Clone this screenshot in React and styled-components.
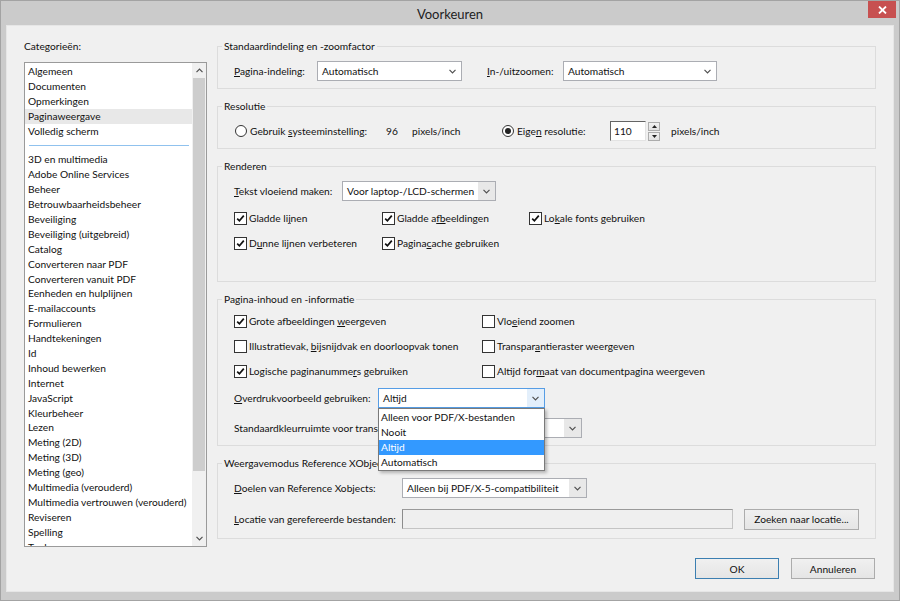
import React from "react";
import styled, { createGlobalStyle } from "styled-components";

const GlobalStyle = createGlobalStyle`
  html, body {
    margin: 0;
    padding: 0;
    background: #cbcbcb;
  }
  body {
    font-family: Lato, "Liberation Sans", sans-serif;
    font-size: 10.2px;
    color: #111;
  }
`;

const Window = styled.div`
  width: 900px;
  height: 601px;
  box-sizing: border-box;
  border: 1px solid #a3a3a3;
  background: #cbcbcb;
  display: flex;
  flex-direction: column;
`;

const TitleBar = styled.div`
  height: 24px;
  flex: none;
  display: grid;
  grid-template-columns: 1fr auto 1fr;
  align-items: center;
`;

const Title = styled.div`
  grid-column: 2;
  font-size: 13px;
  color: #222;
  padding-top: 1px;
`;

const CloseButton = styled.div`
  grid-column: 3;
  justify-self: end;
  align-self: start;
  width: 28px;
  height: 17px;
  margin-right: 3px;
  background: #c75050;
  display: flex;
  align-items: center;
  justify-content: center;
`;

const Body = styled.div`
  flex: 1;
  margin: 0 5px 8px;
  border: 1px solid #e6e6e6;
  background: #f0f0f0;
  padding: 13px 17px 0 17px;
  display: flex;
  flex-direction: column;
`;

const Main = styled.div`
  display: grid;
  grid-template-columns: 183px 1fr;
  column-gap: 10px;
`;

const LeftCol = styled.div`
  display: flex;
  flex-direction: column;
`;

const CatLabel = styled.div`
  line-height: 14px;
`;

const ListBox = styled.div`
  margin-top: 9px;
  height: 485px;
  box-sizing: border-box;
  border: 1px solid #9a9a9a;
  background: #fff;
  display: flex;
`;

const ListItems = styled.div`
  flex: 1;
  overflow: hidden;
  padding-top: 1px;
`;

const ListItem = styled.div`
  height: 14.9px;
  line-height: 14.9px;
  padding-left: 3px;
  white-space: nowrap;
  background: ${(p) => (p.$sel ? "#e8e8e8" : "transparent")};
`;

const Separator = styled.div`
  height: 14px;
  display: flex;
  align-items: center;
  padding: 0 3px 0 4px;
  &::after {
    content: "";
    flex: 1;
    height: 1px;
    background: #90c2ee;
  }
`;

const ScrollBar = styled.div`
  width: 14px;
  flex: none;
  display: flex;
  flex-direction: column;
  background: #f0f0f0;
`;

const ScrollArrow = styled.div`
  height: 15px;
  display: flex;
  align-items: center;
  justify-content: center;
`;

const ScrollTrack = styled.div`
  flex: 1;
`;

const ScrollThumb = styled.div`
  height: 393px;
  background: #cdcdcd;
  margin: 0 1px;
`;

const RightCol = styled.div`
  display: flex;
  flex-direction: column;
  gap: 10px;
`;

const Group = styled.fieldset`
  margin: 0;
  min-inline-size: 0;
  border: 1px solid #dcdcdc;
  padding: 0 0 ${(p) => p.$pb ?? 7}px 16px;
`;

const Legend = styled.legend`
  padding: 0 2px;
  margin-left: -12px;
  line-height: 14px;
`;

const Row = styled.div`
  display: flex;
  align-items: center;
  height: ${(p) => p.$h ?? 20}px;
  margin-top: ${(p) => p.$mt ?? 0}px;
  white-space: nowrap;
`;

const Label = styled.span`
  flex: none;
  width: ${(p) => (p.$w ? `${p.$w}px` : "auto")};
  margin-left: ${(p) => p.$ml ?? 0}px;
  white-space: nowrap;
  overflow: visible;
`;

const Key = styled.span`
  text-decoration: underline;
`;

const SelectBox = styled.div`
  position: relative;
  flex: none;
  width: ${(p) => p.$w}px;
  height: ${(p) => p.$h ?? 20}px;
  box-sizing: border-box;
  margin-left: ${(p) => p.$ml ?? 0}px;
  border: 1px solid ${(p) => (p.$focus ? "#569de5" : "#abadb3")};
  background: #fff;
  display: flex;
  align-items: center;
  z-index: ${(p) => (p.$focus ? 5 : "auto")};
`;

const SelectText = styled.span`
  flex: 1;
  padding-left: 4px;
  white-space: nowrap;
  overflow: hidden;
`;

const SelectArrow = styled.span`
  width: 17px;
  align-self: stretch;
  display: flex;
  align-items: center;
  justify-content: center;
  background: ${(p) =>
    p.$shade ? "#e8e8e8" : p.$focus ? "#e3effb" : "transparent"};
`;

const DropList = styled.div`
  position: absolute;
  left: -1px;
  right: -1px;
  top: calc(100% + 1px);
  box-sizing: border-box;
  border: 1px solid #7a7a7a;
  background: #fff;
  box-shadow: 2px 2px 3px rgba(0, 0, 0, 0.25);
  padding: 1px 0 0;
`;

const DropItem = styled.div`
  height: 15px;
  line-height: 15px;
  padding-left: 2px;
  background: ${(p) => (p.$sel ? "#3399ff" : "transparent")};
  color: ${(p) => (p.$sel ? "#fff" : "#111")};
`;

const CheckGrid = styled.div`
  display: grid;
  grid-template-columns: ${(p) => p.$cols};
  grid-auto-rows: 20px;
  row-gap: 5px;
  margin-top: ${(p) => p.$mt ?? 0}px;
`;

const CheckItem = styled.div`
  display: flex;
  align-items: center;
  white-space: nowrap;
`;

const Box = styled.span`
  width: 13px;
  height: 13px;
  box-sizing: border-box;
  border: 1px solid #333;
  background: #fff;
  margin-right: 2px;
  display: flex;
  align-items: center;
  justify-content: center;
  flex: none;
`;

const RadioItem = styled.div`
  display: flex;
  align-items: center;
  flex: none;
  width: ${(p) => p.$w}px;
`;

const Circle = styled.span`
  width: 12px;
  height: 12px;
  box-sizing: border-box;
  border: 1px solid #333;
  border-radius: 50%;
  background: #fff;
  margin: 0 3px 0 1px;
  display: flex;
  align-items: center;
  justify-content: center;
  flex: none;
  &::after {
    content: "";
    width: 6px;
    height: 6px;
    border-radius: 50%;
    background: ${(p) => (p.$on ? "#222" : "transparent")};
  }
`;

const SpinInput = styled.div`
  width: 36px;
  height: 20px;
  box-sizing: border-box;
  border: 1px solid #e3e3e3;
  border-top-color: #646464;
  border-left-color: #646464;
  background: #fff;
  padding-left: 3px;
  display: flex;
  align-items: center;
  flex: none;
`;

const Spinner = styled.div`
  width: 12px;
  height: 19px;
  margin-left: 2px;
  display: flex;
  flex-direction: column;
  gap: 1px;
  flex: none;
`;

const SpinBtn = styled.div`
  flex: 1;
  border: 1px solid #acacac;
  background: linear-gradient(#f2f2f2, #e2e2e2);
  display: flex;
  align-items: center;
  justify-content: center;
`;

const TextInput = styled.div`
  width: ${(p) => p.$w}px;
  height: 20px;
  box-sizing: border-box;
  border: 1px solid #c4c4c4;
  border-left-color: #8c8c8c;
  border-top-color: #9a9a9a;
  background: #efefef;
  flex: none;
`;

const Button = styled.button`
  width: ${(p) => p.$w}px;
  height: ${(p) => p.$h ?? 21}px;
  box-sizing: border-box;
  margin-left: ${(p) => p.$ml ?? 0}px;
  border: 1px solid ${(p) => (p.$default ? "#3c7fb1" : "#acacac")};
  background: linear-gradient(#f0f0f0, #e5e5e5);
  font: inherit;
  color: #111;
  padding: 0;
  flex: none;
`;

const Footer = styled.div`
  display: flex;
  justify-content: flex-end;
  gap: 12px;
  margin-top: 11px;
  padding-right: 1px;
`;

const Chevron = ({ up }) => (
  <svg width="7" height="5" viewBox="0 0 7 5">
    <path
      d={up ? "M0.5 4.2 L3.5 1.2 L6.5 4.2" : "M0.5 0.8 L3.5 3.8 L6.5 0.8"}
      fill="none"
      stroke="#505050"
      strokeWidth="1.2"
    />
  </svg>
);

const Tri = ({ up }) => (
  <svg width="5" height="3" viewBox="0 0 5 3">
    <path d={up ? "M0 3 L2.5 0 L5 3 Z" : "M0 0 L2.5 3 L5 0 Z"} fill="#222" />
  </svg>
);

const Checkbox = ({ checked, children }) => (
  <CheckItem>
    <Box>
      {checked && (
        <svg width="9" height="9" viewBox="0 0 9 9">
          <path
            d="M1.2 4.6 L3.4 6.8 L7.8 1.6"
            fill="none"
            stroke="#111"
            strokeWidth="1.7"
          />
        </svg>
      )}
    </Box>
    <span>{children}</span>
  </CheckItem>
);

const Select = ({ w, ml, value, shade, focus, children }) => (
  <SelectBox $w={w} $ml={ml} $focus={focus}>
    <SelectText>{value}</SelectText>
    <SelectArrow $shade={shade} $focus={focus}>
      <Chevron />
    </SelectArrow>
    {children}
  </SelectBox>
);

const topCats = [
  "Algemeen",
  "Documenten",
  "Opmerkingen",
  "Paginaweergave",
  "Volledig scherm",
];

const cats = [
  "3D en multimedia",
  "Adobe Online Services",
  "Beheer",
  "Betrouwbaarheidsbeheer",
  "Beveiliging",
  "Beveiliging (uitgebreid)",
  "Catalog",
  "Converteren naar PDF",
  "Converteren vanuit PDF",
  "Eenheden en hulplijnen",
  "E-mailaccounts",
  "Formulieren",
  "Handtekeningen",
  "Id",
  "Inhoud bewerken",
  "Internet",
  "JavaScript",
  "Kleurbeheer",
  "Lezen",
  "Meting (2D)",
  "Meting (3D)",
  "Meting (geo)",
  "Multimedia (verouderd)",
  "Multimedia vertrouwen (verouderd)",
  "Reviseren",
  "Spelling",
  "Tool",
];

const dropOptions = ["Alleen voor PDF/X-bestanden", "Nooit", "Altijd", "Automatisch"];

const App = () => {
  return (
    <>
      <GlobalStyle />
      <Window>
        <TitleBar>
          <Title>Voorkeuren</Title>
          <CloseButton>
            <svg width="9" height="8" viewBox="0 0 9 8">
              <path d="M1 0.5 L8 7.5 M8 0.5 L1 7.5" stroke="#fff" strokeWidth="1.8" />
            </svg>
          </CloseButton>
        </TitleBar>
        <Body>
          <Main>
            <LeftCol>
              <CatLabel>Categorieën:</CatLabel>
              <ListBox>
                <ListItems>
                  {topCats.map((c) => (
                    <ListItem key={c} $sel={c === "Paginaweergave"}>
                      {c}
                    </ListItem>
                  ))}
                  <Separator />
                  {cats.map((c) => (
                    <ListItem key={c}>{c}</ListItem>
                  ))}
                </ListItems>
                <ScrollBar>
                  <ScrollArrow>
                    <Chevron up />
                  </ScrollArrow>
                  <ScrollTrack>
                    <ScrollThumb />
                  </ScrollTrack>
                  <ScrollArrow>
                    <Chevron />
                  </ScrollArrow>
                </ScrollBar>
              </ListBox>
            </LeftCol>

            <RightCol>
              <Group>
                <Legend>Standaardindeling en -zoomfactor</Legend>
                <Row $mt={8}>
                  <Label $w={83}>
                    <Key>P</Key>agina-indeling:
                  </Label>
                  <Select w={145} value="Automatisch" />
                  <Label $w={76} $ml={25}>
                    <Key>I</Key>n-/uitzoomen:
                  </Label>
                  <Select w={154} value="Automatisch" />
                </Row>
              </Group>

              <Group>
                <Legend>Resolutie</Legend>
                <Row $mt={8}>
                  <RadioItem $w={152}>
                    <Circle />
                    <span>
                      Gebruik <Key>s</Key>ysteeminstelling:
                    </span>
                  </RadioItem>
                  <Label $w={26}>96</Label>
                  <Label $w={89}>pixels/inch</Label>
                  <RadioItem $w={109}>
                    <Circle $on />
                    <span>
                      Eige<Key>n</Key> resolutie:
                    </span>
                  </RadioItem>
                  <SpinInput>110</SpinInput>
                  <Spinner>
                    <SpinBtn>
                      <Tri up />
                    </SpinBtn>
                    <SpinBtn>
                      <Tri />
                    </SpinBtn>
                  </Spinner>
                  <Label $ml={11}>pixels/inch</Label>
                </Row>
              </Group>

              <Group $pb={28}>
                <Legend>Renderen</Legend>
                <Row $mt={8}>
                  <Label $w={108}>
                    <Key>T</Key>ekst vloeiend maken:
                  </Label>
                  <Select w={154} value="Voor laptop-/LCD-schermen" shade />
                </Row>
                <CheckGrid $cols="148px 147px auto" $mt={7}>
                  <Checkbox checked>
                    Gladde li<Key>j</Key>nen
                  </Checkbox>
                  <Checkbox checked>
                    Gladde a<Key>f</Key>beeldingen
                  </Checkbox>
                  <Checkbox checked>
                    Lo<Key>k</Key>ale fonts gebruiken
                  </Checkbox>
                  <Checkbox checked>
                    D<Key>u</Key>nne lijnen verbeteren
                  </Checkbox>
                  <Checkbox checked>
                    Pagina<Key>c</Key>ache gebruiken
                  </Checkbox>
                </CheckGrid>
              </Group>

              <Group>
                <Legend>Pagina-inhoud en -informatie</Legend>
                <CheckGrid $cols="248px auto" $mt={5}>
                  <Checkbox checked>
                    Grote afbeeldingen <Key>w</Key>eergeven
                  </Checkbox>
                  <Checkbox>
                    Vlo<Key>e</Key>iend zoomen
                  </Checkbox>
                  <Checkbox>
                    Illustratievak, <Key>b</Key>ijsnijdvak en doorloopvak tonen
                  </Checkbox>
                  <Checkbox>
                    Transpar<Key>a</Key>ntieraster weergeven
                  </Checkbox>
                  <Checkbox checked>
                    Logische paginanumme<Key>r</Key>s gebruiken
                  </Checkbox>
                  <Checkbox>
                    Altijd for<Key>m</Key>aat van documentpagina weergeven
                  </Checkbox>
                </CheckGrid>
                <Row $mt={7}>
                  <Label $w={144}>
                    <Key>O</Key>verdrukvoorbeeld gebruiken:
                  </Label>
                  <Select w={167} value="Altijd" focus>
                    <DropList>
                      {dropOptions.map((o) => (
                        <DropItem key={o} $sel={o === "Altijd"}>
                          {o}
                        </DropItem>
                      ))}
                    </DropList>
                  </Select>
                </Row>
                <Row $mt={10}>
                  <Label $w={190}>Standaardkleurruimte voor transparantie:</Label>
                  <Select w={158} value="" shade />
                </Row>
              </Group>

              <Group $pb={8}>
                <Legend>Weergavemodus Reference XObjects</Legend>
                <Row $mt={8}>
                  <Label $w={168}>
                    <Key>D</Key>oelen van Reference Xobjects:
                  </Label>
                  <Select w={185} value="Alleen bij PDF/X-5-compatibiliteit" shade />
                </Row>
                <Row $mt={10} $h={22}>
                  <Label $w={168}>
                    <Key>L</Key>ocatie van gerefereerde bestanden:
                  </Label>
                  <TextInput $w={331} />
                  <Button $w={115} $h={21} $ml={11}>
                    Zoeken naar locatie...
                  </Button>
                </Row>
              </Group>
            </RightCol>
          </Main>
          <Footer>
            <Button $w={84} $default>
              OK
            </Button>
            <Button $w={84}>Annuleren</Button>
          </Footer>
        </Body>
      </Window>
    </>
  );
};

export default App;
